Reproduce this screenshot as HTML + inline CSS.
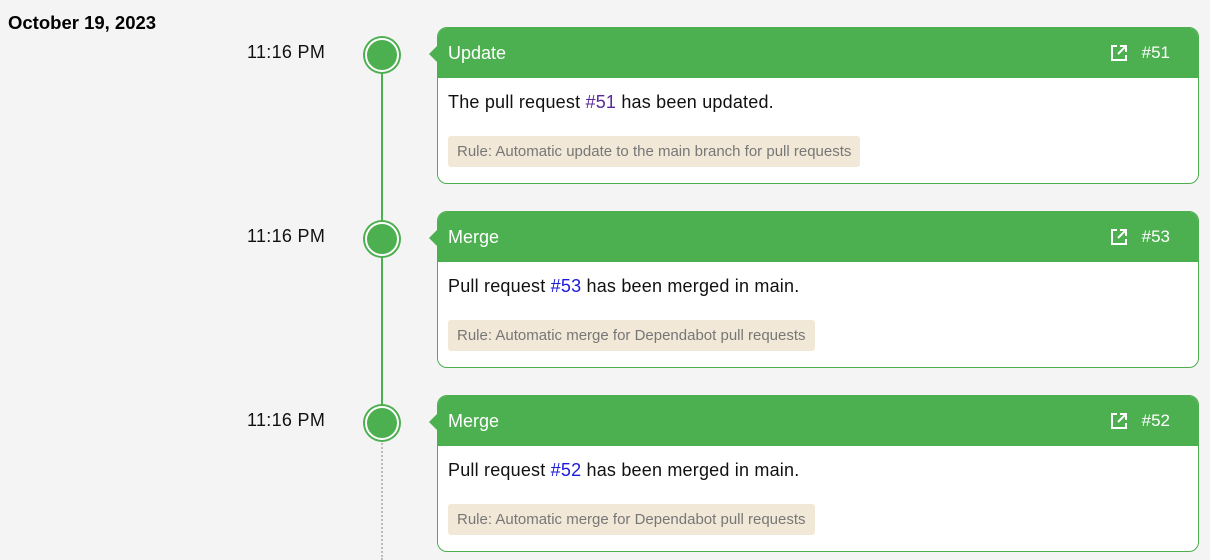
<!DOCTYPE html>
<html><head><style>
body{margin:0;width:1210px;height:560px;background:#f4f4f4;font-family:"Liberation Sans",sans-serif;position:relative;overflow:hidden}
.date{position:absolute;left:8px;top:12px;font-weight:bold;font-size:18.5px;color:#000}
.time{position:absolute;left:247px;font-size:18px;color:#111;letter-spacing:0.3px}
.dot{position:absolute;left:365px;width:30px;height:30px;border-radius:50%;background:#4caf50;border:2px solid #fff;box-shadow:0 0 0 2px #4caf50}
.line{position:absolute;left:381px;width:2px;background:#4caf50}
.card{position:absolute;left:437px;width:760px;height:155px;border:1px solid #4caf50;border-radius:10px;background:#fff}
.hd{height:50px;background:#4caf50;border-radius:9px 9px 0 0;color:#fff;font-size:18px;position:relative}
.hd .t{position:absolute;left:10px;top:15px}
.hd .n{position:absolute;right:28px;top:15px;font-size:17px}
.hd svg{position:absolute;right:70px;top:16px}
.arr{position:absolute;left:-9px;top:17px;width:0;height:0;border-top:9px solid transparent;border-bottom:9px solid transparent;border-right:9px solid #4caf50}
.body{padding:14px 10px;font-size:18px;color:#111;letter-spacing:0.2px}
.rule{display:inline-block;margin-top:23px;background:#f1e8d7;color:#777;font-size:15px;padding:7px 9px;border-radius:3px;letter-spacing:0}
a{text-decoration:none}
</style></head><body>
<div class="date">October 19, 2023</div>
<div class="line" style="top:70px;height:340px"></div>
<div style="position:absolute;left:381px;top:440px;height:120px;border-left:2px dotted #bbb"></div>

<div class="time" style="top:42px">11:16 PM</div>
<div class="dot" style="top:38px"></div>
<div class="card" style="top:27px"><div class="arr"></div><div class="hd"><span class="t">Update</span>
<svg width="18" height="18" viewBox="0 0 18 18" fill="none" stroke="#fff" stroke-width="2"><path d="M7 2H2v14h14v-5M10 2h6v6M16 2L8 10"/></svg><span class="n">#51</span></div>
<div class="body">The pull request <a style="color:#5b2a96">#51</a> has been updated.<br><span class="rule">Rule: Automatic update to the main branch for pull requests</span></div></div>

<div class="time" style="top:226px">11:16 PM</div>
<div class="dot" style="top:222px"></div>
<div class="card" style="top:211px"><div class="arr"></div><div class="hd"><span class="t">Merge</span>
<svg width="18" height="18" viewBox="0 0 18 18" fill="none" stroke="#fff" stroke-width="2"><path d="M7 2H2v14h14v-5M10 2h6v6M16 2L8 10"/></svg><span class="n">#53</span></div>
<div class="body">Pull request <a style="color:#1a1add">#53</a> has been merged in main.<br><span class="rule">Rule: Automatic merge for Dependabot pull requests</span></div></div>

<div class="time" style="top:410px">11:16 PM</div>
<div class="dot" style="top:406px"></div>
<div class="card" style="top:395px"><div class="arr"></div><div class="hd"><span class="t">Merge</span>
<svg width="18" height="18" viewBox="0 0 18 18" fill="none" stroke="#fff" stroke-width="2"><path d="M7 2H2v14h14v-5M10 2h6v6M16 2L8 10"/></svg><span class="n">#52</span></div>
<div class="body">Pull request <a style="color:#1a1add">#52</a> has been merged in main.<br><span class="rule">Rule: Automatic merge for Dependabot pull requests</span></div></div>
</body></html>
